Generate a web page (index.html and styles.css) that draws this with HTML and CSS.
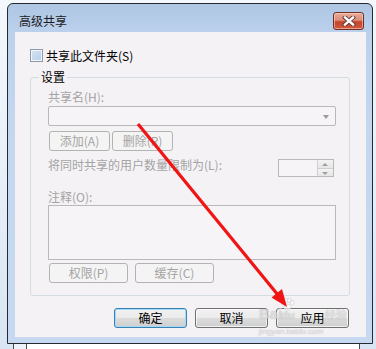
FILE: index.html
```html
<!DOCTYPE html>
<html lang="zh-CN">
<head>
    <meta charset="UTF-8">
    <title>高级共享</title>
    <link rel="stylesheet" href="styles.css">
</head>
<body>
<div class="screen">

    <div class="window">
        <div class="titlebar">
            <span class="title">高级共享</span>
            <span class="close-btn">
                <svg width="14" height="10" viewBox="0 0 14 10">
                    <path d="M3 1.5 L11 8.5 M11 1.5 L3 8.5" stroke="#5b3a36" stroke-width="4.2" stroke-linecap="square" fill="none"/>
                    <path d="M3 1.5 L11 8.5 M11 1.5 L3 8.5" stroke="#ffffff" stroke-width="2.4" stroke-linecap="square" fill="none"/>
                </svg>
            </span>
        </div>

        <div class="client">
            <div class="check-row">
                <span class="checkbox"></span>
                <span>共享此文件夹(S)</span>
            </div>

            <div class="group">
                <span class="group-title">设置</span>
                <div class="label first">共享名(H):</div>
                <div class="combo"><span class="combo-arrow"></span></div>
                <div class="btn-row">
                    <span class="btn disabled small">添加(A)</span>
                    <span class="btn disabled small">删除(R)</span>
                </div>
                <div class="limit-row">
                    <span class="label">将同时共享的用户数量限制为(L):</span>
                    <span class="spinner">
                        <span class="spin-field"></span>
                        <span class="spin-btns">
                            <span class="spin up"></span>
                            <span class="spin down"></span>
                        </span>
                    </span>
                </div>
                <div class="label comment">注释(O):</div>
                <div class="textarea"></div>
                <div class="btn-row tight">
                    <span class="btn disabled wide">权限(P)</span>
                    <span class="btn disabled wide">缓存(C)</span>
                </div>
            </div>

            <div class="dialog-buttons">
                <span class="btn default">确定</span>
                <span class="btn">取消</span>
                <span class="btn">应用</span>
            </div>
        </div>
    </div>

    <div class="behind"></div>

    <!-- 水印 -->
    <div class="watermark">
        <div class="wm-logo">
            <span>Bai</span>
            <svg class="wm-paw" width="15" height="13" viewBox="0 0 16 14">
                <g fill="rgba(255,255,255,0.6)" stroke="rgba(150,150,150,0.35)" stroke-width="0.8">
                    <ellipse cx="3" cy="5" rx="2" ry="2.4"/>
                    <ellipse cx="6.5" cy="2.4" rx="1.9" ry="2.2"/>
                    <ellipse cx="10" cy="2.4" rx="1.9" ry="2.2"/>
                    <ellipse cx="13.2" cy="5" rx="2" ry="2.4"/>
                    <path d="M8 6.5 C5 6.5 3.5 10 4.5 12 C5.5 13.5 7 12.6 8 12.6 C9 12.6 10.5 13.5 11.5 12 C12.5 10 11 6.5 8 6.5 Z"/>
                </g>
            </svg>
            <span class="wm-du">du</span>
            <span class="wm-cn">经验</span>
        </div>
        <div class="wm-url">jingyan.baidu.com</div>
    </div>

    <!-- 红色箭头 -->
    <svg class="annotation" width="376" height="349" viewBox="0 0 376 349">
        <line x1="138" y1="124" x2="278" y2="295" stroke="#f01414" stroke-width="3.2"/>
        <polygon points="287,307 271.5,297.5 282,289" fill="#f01414"/>
    </svg>

</div>
</body>
</html>
```

FILE: styles.css
```css
:root {
    --client-bg: #f5f2f5;
    --frame-blue: #c3d7ef;
    --gray-text: #a4a4a4;
    --field-border: #b9b9b9;
}

* {
    box-sizing: border-box;
}

body {
    margin: 0;
    font-family: "Noto Sans CJK SC", "Liberation Sans", sans-serif;
    font-size: 12px;
    color: #000;
    background: linear-gradient(#f4f8fc, #d9e5f3);
}

.screen {
    position: relative;
    width: 376px;
    height: 349px;
    overflow: hidden;
    padding-top: 3px;
}

/* 窗口外框 */
.window {
    margin-left: 7px;
    width: 366px;
    height: 341px;
    border: 1px solid #262a30;
    border-radius: 6px 6px 0 0;
    background: linear-gradient(#aec6e4 0px, #bcd1ec 30px, var(--frame-blue) 120px, #c6d9f0 100%);
    padding: 0 6px 6px 7px;
    display: flex;
    flex-direction: column;
}

.titlebar {
    height: 28px;
    display: flex;
    align-items: flex-start;
    justify-content: space-between;
    padding: 8px 2px 0 4px;
}

.title {
    line-height: 17px;
    color: #1b1b1b;
}

.close-btn {
    width: 31px;
    height: 18px;
    border: 1px solid #6e3025;
    border-radius: 3px;
    background: linear-gradient(#e9aa9a 0%, #dc8d79 45%, #c5432b 55%, #cf5a3e 100%);
    box-shadow: inset 0 0 0 1px rgba(255, 220, 210, 0.55);
    display: flex;
    align-items: center;
    justify-content: center;
}

.close-btn svg {
    display: block;
}

/* 客户区 */
.client {
    height: 305px;
    background-color: var(--client-bg);
    padding: 16px 16px 9px 15px;
}

.check-row {
    height: 15px;
    display: flex;
    align-items: center;
    gap: 3px;
    line-height: 15px;
}

.checkbox {
    width: 13px;
    height: 13px;
    border: 1px solid #8a9aab;
    background: linear-gradient(135deg, #d6e4f3, #b6cde8);
    box-shadow: inset 0 0 0 1px #f3f6fa;
}

/* 设置分组 */
.group {
    margin-top: 14px;
    height: 219px;
    border: 1px solid #d3dce3;
    border-radius: 3px;
    padding: 0 13px 12px 17px;
    display: flex;
    flex-direction: column;
}

.group-title {
    align-self: flex-start;
    margin: -9px 0 0 -9px;
    padding: 0 2px;
    line-height: 16px;
    background-color: var(--client-bg);
}

.label {
    line-height: 16px;
    color: var(--gray-text);
}

.label.first {
    margin-top: 4px;
}

.label.comment {
    margin-top: 12px;
}

.combo {
    position: relative;
    margin-top: 1px;
    height: 20px;
    border: 1px solid var(--field-border);
    border-radius: 2px;
    background-color: #f6f4f6;
}

.combo-arrow {
    position: absolute;
    right: 6px;
    top: 8px;
    border-left: 3.5px solid transparent;
    border-right: 3.5px solid transparent;
    border-top: 4px solid #9a9a9a;
}

.btn-row {
    display: flex;
    gap: 2px;
    margin-top: 5px;
    padding-left: 1px;
}

.btn-row.tight {
    gap: 7px;
    margin-top: 3px;
}

.limit-row {
    display: flex;
    justify-content: space-between;
    align-items: flex-start;
    margin-top: 6px;
    height: 20px;
    padding-right: 2px;
}

.spinner {
    margin-top: 2px;
    display: flex;
    height: 18px;
    width: 56px;
    border: 1px solid var(--field-border);
}

.spin-field {
    flex: 1;
    background-color: #f6f4f6;
}

.spin-btns {
    width: 16px;
    display: flex;
    flex-direction: column;
    border-left: 1px solid #cfcfcf;
}

.spin {
    flex: 1;
    position: relative;
    background: linear-gradient(#f3f3f3, #e6e6e6);
}

.spin.up {
    border-bottom: 1px solid #cfcfcf;
}

.spin::after {
    content: '';
    position: absolute;
    left: 4px;
    top: 3px;
    border-left: 3px solid transparent;
    border-right: 3px solid transparent;
}

.spin.up::after {
    border-bottom: 3px solid #a0a0a0;
}

.spin.down::after {
    border-top: 3px solid #a0a0a0;
}

.textarea {
    height: 55px;
    border: 1px solid var(--field-border);
    background-color: #f6f4f6;
}

/* 按钮 */
.btn {
    height: 20px;
    width: 73px;
    display: flex;
    align-items: center;
    justify-content: center;
    border: 1px solid #707070;
    border-radius: 3px;
    background: linear-gradient(#f2f2f2 0%, #ebebeb 48%, #dcdcdc 52%, #cfcfcf 100%);
    box-shadow: inset 0 0 0 1px rgba(255, 255, 255, 0.7);
    line-height: 16px;
}

.btn.default {
    border-color: #3c7fb1;
    box-shadow: inset 0 0 0 1px #9fdcf7;
}

.btn.disabled {
    border-color: #b3b3b3;
    background: #f4f4f4;
    box-shadow: none;
    color: var(--gray-text);
}

.btn.small {
    width: 61px;
}

.btn.wide {
    width: 79px;
}

.dialog-buttons {
    margin-top: 12px;
    display: flex;
    justify-content: flex-end;
    gap: 8px;
    padding-right: 1px;
}

/* 后面的窗口 */
.behind {
    margin-left: 13px;
    width: 347px;
    height: 6px;
    border-left: 1px solid #4a4a4a;
    border-right: 1px solid #4a4a4a;
    background: linear-gradient(90deg, #eef3f9 0, #eef3f9 12px, #4a4a4a 12px, #4a4a4a 13px, #ffffff 13px);
}

/* 水印 */
.watermark {
    position: absolute;
    left: 259px;
    top: 296px;
    color: rgba(255, 255, 255, 0.55);
    text-shadow: 0 0 1px rgba(120, 120, 120, 0.6);
    font-family: "Liberation Sans", sans-serif;
    pointer-events: none;
}

.wm-logo {
    display: flex;
    align-items: flex-end;
    height: 25px;
    font-size: 15px;
    font-weight: bold;
    line-height: 15px;
}

.wm-paw {
    margin: 0 0 10px -2px;
}

.wm-du {
    margin-left: -14px;
    font-size: 11px;
    line-height: 11px;
}

.wm-cn {
    margin-left: 30px;
    font-family: "Noto Sans CJK SC", sans-serif;
    font-size: 11px;
    font-weight: normal;
    line-height: 13px;
}

.wm-url {
    font-size: 8px;
    line-height: 9px;
    margin-top: 6px;
}

.annotation {
    position: absolute;
    left: 0;
    top: 0;
    pointer-events: none;
}
```
